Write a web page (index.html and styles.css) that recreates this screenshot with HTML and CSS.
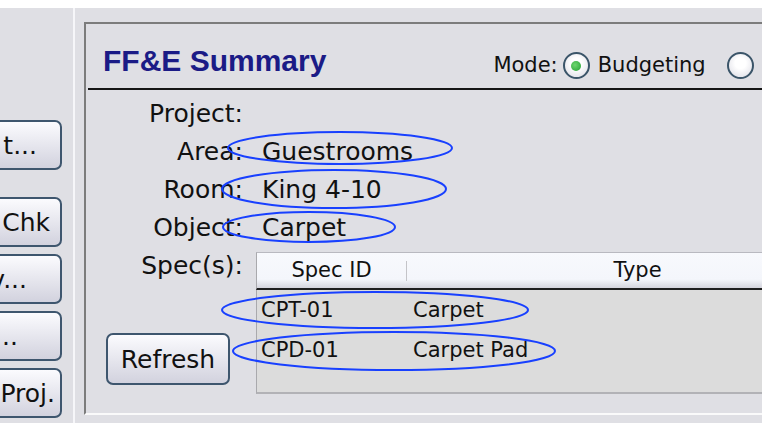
FILE: index.html
```html
<!DOCTYPE html>
<html lang="en">
<head>
  <meta charset="UTF-8">
  <title>FF&amp;E Summary</title>
  <link rel="stylesheet" href="styles.css">
</head>
<body>
  <div class="app">
    <aside class="side">
      <button class="side-btn end-a">t...</button>
      <button class="side-btn end-b spaced">Chk</button>
      <button class="side-btn end-c">v...</button>
      <button class="side-btn end-d">..</button>
      <button class="side-btn end-e">Proj.</button>
    </aside>

    <main class="main">
      <section class="panel">
        <header class="panel-head">
          <h1 class="title">FF&amp;E Summary</h1>
          <div class="mode">
            <span class="mode-label">Mode:</span>
            <span class="radio checked"></span>
            <span class="radio-text">Budgeting</span>
            <span class="radio"></span>
          </div>
        </header>
        <div class="rule"></div>

        <div class="form">
          <div class="label">Project:</div>
          <div class="value"></div>

          <div class="label">Area:</div>
          <div class="value">Guestrooms</div>

          <div class="label">Room:</div>
          <div class="value">King 4-10</div>

          <div class="label">Object:</div>
          <div class="value">Carpet</div>

          <div class="spec-left">
            <div class="label">Spec(s):</div>
            <button class="refresh">Refresh</button>
          </div>
          <div class="specs">
            <div class="specs-head">
              <span class="th-id">Spec ID</span>
              <span class="th-sep"></span>
              <span class="th-type">Type</span>
            </div>
            <div class="specs-body">
              <div class="specs-row">
                <span class="td-id">CPT-01</span>
                <span class="td-type">Carpet</span>
              </div>
              <div class="specs-row">
                <span class="td-id">CPD-01</span>
                <span class="td-type">Carpet Pad</span>
              </div>
            </div>
          </div>
        </div>
      </section>
    </main>
  </div>

  <!-- hand drawn review marks over the form -->
  <svg class="marks" width="769" height="433" viewBox="0 0 769 433">
    <ellipse cx="340" cy="148" rx="112" ry="16"/>
    <ellipse cx="334" cy="189" rx="112" ry="19"/>
    <ellipse cx="309" cy="227" rx="86" ry="15"/>
    <ellipse cx="375" cy="310" rx="153" ry="18"/>
    <ellipse cx="394" cy="351" rx="161" ry="19"/>
  </svg>
</body>
</html>
```

FILE: styles.css
```css
body {
  margin: 0;
  background: #fff;
  font-family: "DejaVu Sans", sans-serif;
  color: #111;
}
.app {
  width: 762px;
  height: 415px;
  margin-top: 8px;
  background: #dfdfe4;
  display: flex;
  overflow: hidden;
}

/* left button column, cut off by the window */
.side {
  width: 73px;
  flex: none;
  border-right: 2px solid #f6f6f9;
  display: flex;
  flex-direction: column;
  gap: 7px;
  padding-top: 112px;
}
.side-btn {
  width: 130px;
  height: 50px;
  margin-left: -68px;
  flex: none;
  border: 2px solid #3e566e;
  border-radius: 7px;
  background: linear-gradient(#fbfbfe, #d2d2de);
  font-family: "DejaVu Sans", sans-serif;
  font-size: 25px;
  color: #111;
  text-align: right;
  white-space: nowrap;
  overflow: hidden;
}
.side-btn.spaced { margin-top: 20px; }
.end-a { padding-right: 23px; }
.end-b { padding-right: 10px; }
.end-c { padding-right: 33px; }
.end-d { padding-right: 42px; }
.end-e { padding-right: 5px; }

.main {
  flex: 1;
  display: flex;
  padding: 14px 0 8px 9px;
}
.panel {
  flex: 1;
  border-top: 2px solid #7c7c7c;
  border-left: 2px solid #7c7c7c;
  border-bottom: 2px solid #fafafa;
}
.panel-head {
  height: 64px;
  box-sizing: border-box;
  display: flex;
  align-items: flex-start;
  padding: 20px 0 0 17px;
  white-space: nowrap;
}
.title {
  margin: 0;
  font-family: "Liberation Sans", Arial, sans-serif;
  font-weight: bold;
  font-size: 30px;
  line-height: 34px;
  color: #1b1b86;
}
.mode {
  display: flex;
  align-items: center;
  margin: 8px 0 0 167px;
  font-size: 21px;
  line-height: 27px;
}
.mode-label { margin-right: 5px; }
.radio {
  width: 23px;
  height: 23px;
  flex: none;
  border: 2px solid #3b5569;
  border-radius: 50%;
  background: radial-gradient(circle at 50% 40%, #ffffff 30%, #d9d9e2 100%);
  display: flex;
  align-items: center;
  justify-content: center;
}
.radio.checked::after {
  content: "";
  width: 10px;
  height: 10px;
  border-radius: 50%;
  background: radial-gradient(circle at 40% 40%, #6fd66f, #23a032);
}
.radio-text { margin: 0 21px 0 8px; }

.rule {
  height: 2px;
  margin-left: 2px;
  background: #151515;
}

.form {
  display: grid;
  grid-template-columns: 157px 1fr;
  padding-top: 5px;
  font-size: 25px;
  line-height: 38px;
}
.label { text-align: right; }
.value { padding-left: 19px; }

.spec-left {
  display: flex;
  flex-direction: column;
  align-items: flex-end;
}
.refresh {
  width: 124px;
  height: 52px;
  margin: 48px 13px 0 0;
  border: 2px solid #3e566e;
  border-radius: 7px;
  background: linear-gradient(#fbfbfe, #d2d2de);
  font-family: "DejaVu Sans", sans-serif;
  font-size: 25px;
  color: #111;
  padding: 0;
}

.specs {
  width: 612px;
  margin: 5px 0 0 13px;
  font-size: 21px;
}
.specs-head {
  height: 35px;
  display: flex;
  align-items: center;
  line-height: 35px;
  border-top: 1px solid #b9b9c0;
  border-left: 1px solid #a9a9ad;
  border-bottom: 2px solid #1e1e1e;
  background: linear-gradient(#f8f9fd 0, #f4f6fb 75%, #d4d4dc 100%);
}
.th-id {
  width: 149px;
  text-align: center;
}
.th-sep {
  width: 1px;
  height: 20px;
  background: #c4c4c8;
}
.th-type {
  flex: 1;
  text-align: center;
}
.specs-body {
  min-height: 102px;
  border-left: 1px solid #a9a9ad;
  border-bottom: 2px solid #b2b2b6;
  background: #dcdcdc;
}
.specs-row {
  display: flex;
  line-height: 40px;
}
.td-id {
  width: 145px;
  padding-left: 4px;
}
.td-type { padding-left: 7px; }

.marks {
  position: absolute;
  top: 0;
  left: 0;
  pointer-events: none;
}
.marks ellipse {
  fill: none;
  stroke: #1840ff;
  stroke-width: 2;
}
```
